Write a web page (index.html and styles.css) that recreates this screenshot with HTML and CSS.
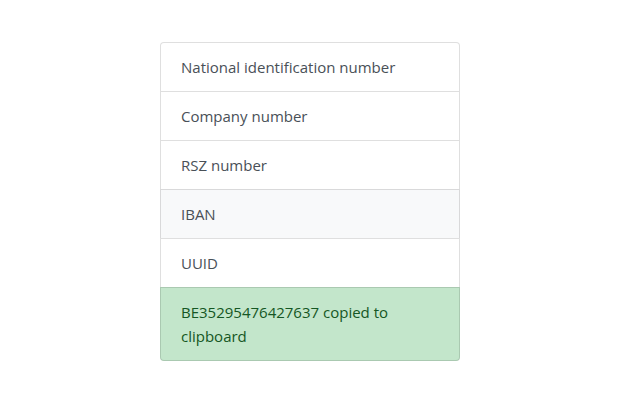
FILE: index.html
```html
<!DOCTYPE html>
<html>
<head>
<meta charset="utf-8">
<link rel="stylesheet" href="styles.css">
</head>
<body>
<div class="stage">
  <div class="list-group">
    <div class="item">National identification number</div>
    <div class="item">Company number</div>
    <div class="item">RSZ number</div>
    <div class="item hover">IBAN</div>
    <div class="item">UUID</div>
    <div class="item success">BE35295476427637 copied to clipboard</div>
  </div>
</div>
</body>
</html>
```
FILE: styles.css
```css
html, body {
  margin: 0;
  padding: 0;
  background: #fff;
}
.stage {
  width: 620px;
  height: 400px;
  display: flex;
  align-items: center;
  justify-content: center;
  padding-top: 2px;
  box-sizing: border-box;
}
.list-group {
  width: 300px;
  display: flex;
  flex-direction: column;
  font-family: "Open Sans", sans-serif;
  font-size: 15px;
  line-height: 24px;
  color: #495057;
}
.item {
  padding: 12px 20px;
  background: #fff;
  border: 1px solid rgba(0,0,0,.125);
  margin-bottom: -1px;
}
.item:first-child {
  border-top-left-radius: 4px;
  border-top-right-radius: 4px;
}
.item:last-child {
  margin-bottom: 0;
  border-bottom-left-radius: 4px;
  border-bottom-right-radius: 4px;
}
.hover {
  background: #f8f9fa;
}
.success {
  background: #c3e6cb;
  color: #155724;
}
```
